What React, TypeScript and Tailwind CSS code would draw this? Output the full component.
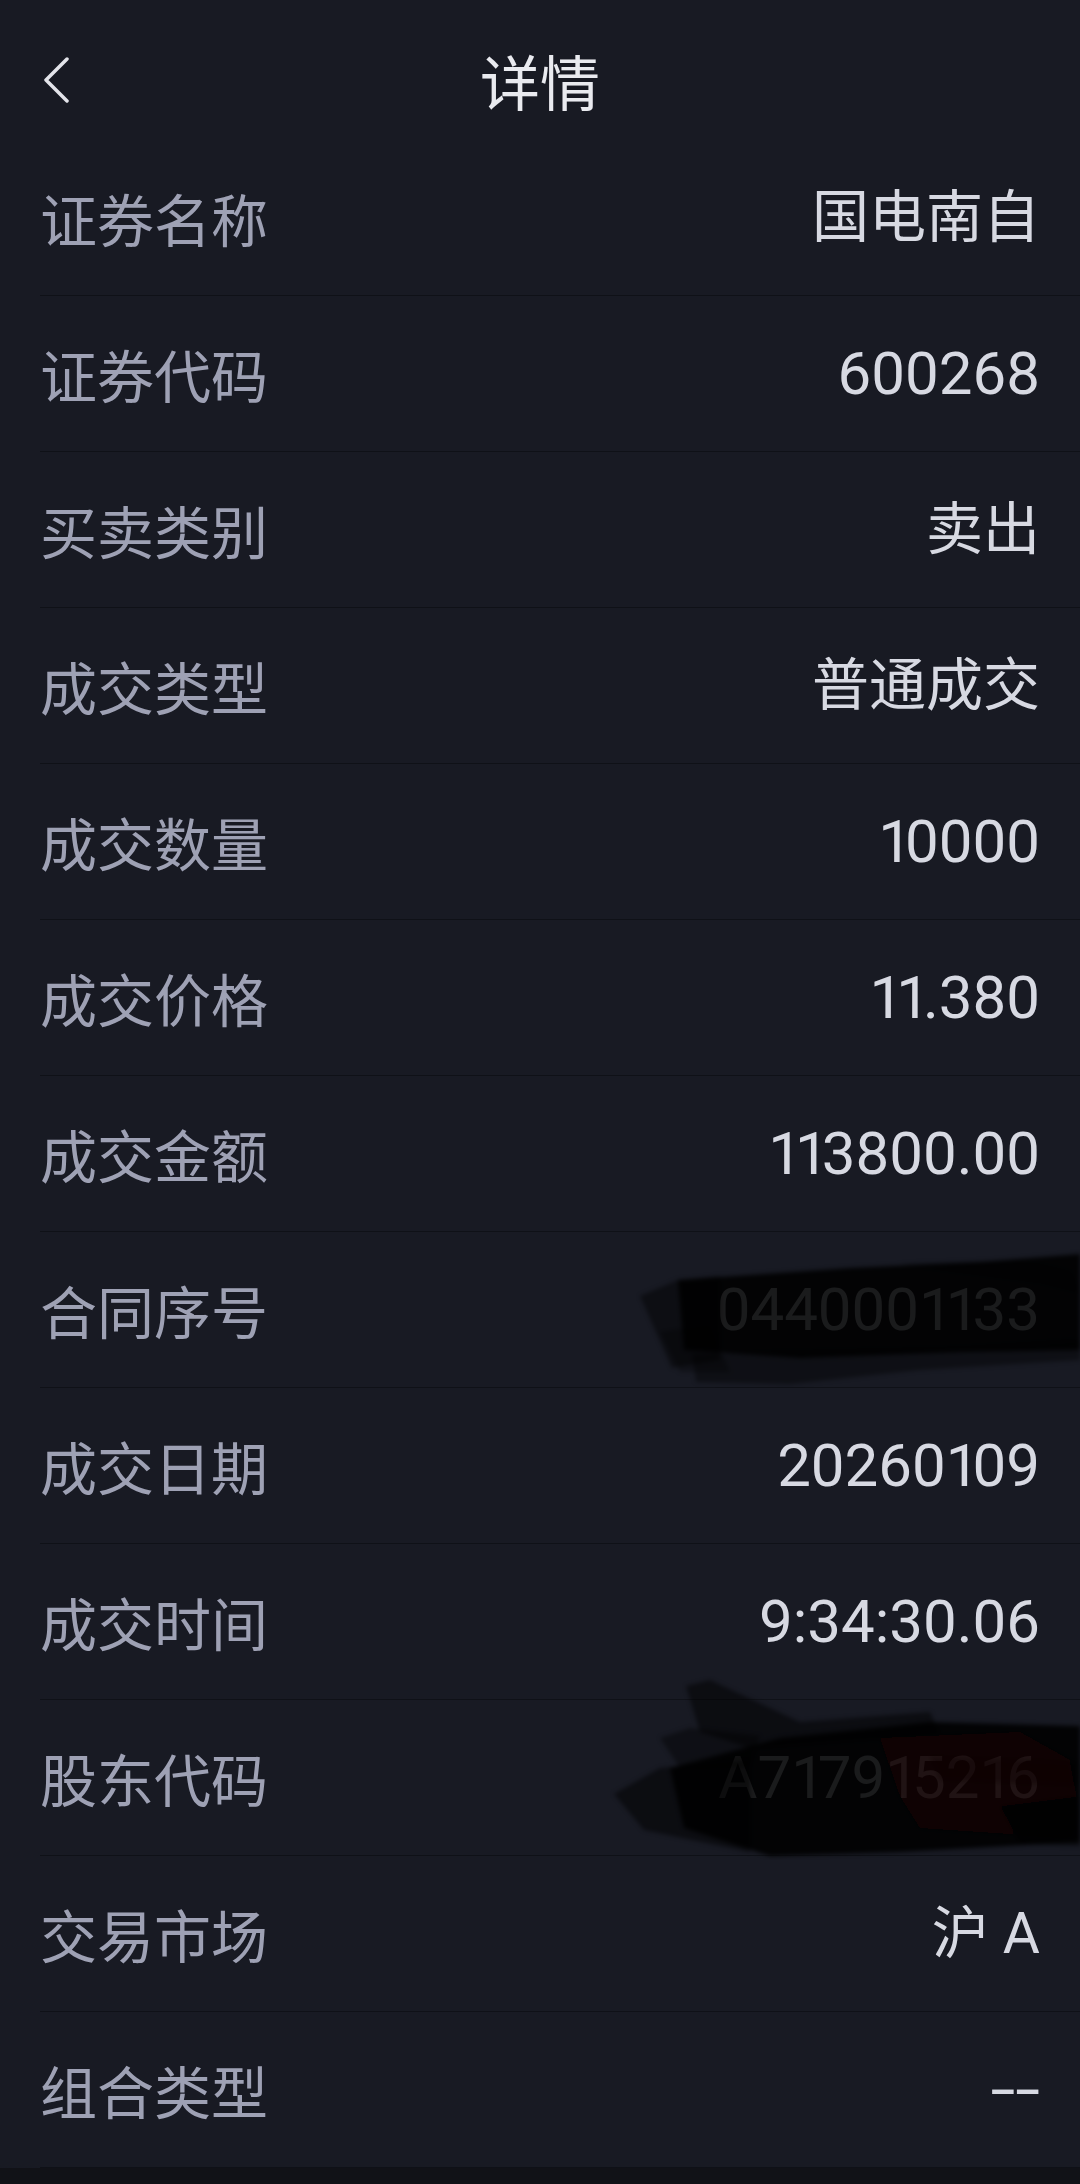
import React from "react";

type Row = { label: string; value: string; cjk?: boolean; redact?: 1 | 2; dash?: boolean };

const rows: Row[] = [
  { label: "证券名称", value: "国电南自", cjk: true },
  { label: "证券代码", value: "600268" },
  { label: "买卖类别", value: "卖出", cjk: true },
  { label: "成交类型", value: "普通成交", cjk: true },
  { label: "成交数量", value: "10000" },
  { label: "成交价格", value: "11.380" },
  { label: "成交金额", value: "113800.00" },
  { label: "合同序号", value: "0440001133", redact: 1 },
  { label: "成交日期", value: "20260109" },
  { label: "成交时间", value: "9:34:30.06" },
  { label: "股东代码", value: "A717915216", redact: 2 },
  { label: "交易市场", value: "沪 A", cjk: true },
  { label: "组合类型", value: "--", dash: true },
];

function Redact1() {
  return (
    <svg
      className="absolute right-0 top-0 h-[156px] w-[480px] pointer-events-none"
      viewBox="0 0 480 156"
    >
      <defs>
        <filter id="b1" x="-10%" y="-10%" width="120%" height="120%">
          <feGaussianBlur stdDeviation="2" />
        </filter>
      </defs>
      <g filter="url(#b1)">
        <polygon points="40,64 78,48 120,44 120,128 72,136" fill="#000" opacity="0.45" />
        <polygon points="60,100 110,92 130,140 80,140" fill="#000" opacity="0.3" />
        <polygon points="92,122 360,116 480,108 480,128 320,138 190,152 96,150" fill="#000" opacity="0.4" />
        <polygon points="78,48 250,36 380,30 480,22 480,118 360,120 200,126 84,118" fill="#000" opacity="0.88" />
        <polygon points="300,32 420,28 470,40 480,60 440,50" fill="#000" opacity="0.3" />
      </g>
    </svg>
  );
}

function Redact2() {
  return (
    <svg
      className="absolute right-0 top-[-24px] h-[184px] w-[480px] pointer-events-none"
      viewBox="0 0 480 184"
    >
      <defs>
        <filter id="b2" x="-10%" y="-10%" width="120%" height="120%">
          <feGaussianBlur stdDeviation="2" />
        </filter>
      </defs>
      <g filter="url(#b2)">
        <polygon points="14,118 60,92 150,84 150,176 44,154" fill="#000" opacity="0.5" />
        <polygon points="86,10 110,4 200,46 330,36 340,58 150,72 100,56" fill="#000" opacity="0.5" />
        <polygon points="60,62 90,52 160,60 150,90 80,92" fill="#000" opacity="0.4" />
        <polygon points="70,92 180,62 330,46 480,50 480,166 300,176 170,180 84,152" fill="#000" opacity="0.88" />
        <polygon points="280,62 420,56 470,84 480,140 470,162 320,152 300,120" fill="#2a0006" opacity="0.3" />
        <polygon points="330,80 480,86 480,110 340,104" fill="#000" opacity="0.4" />
        <polygon points="400,130 480,120 480,170 420,168" fill="#000" opacity="0.5" />
      </g>
    </svg>
  );
}

function Value({ text }: { text: string }) {
  return (
    <>
      {text.split("").map((c, i) =>
        c === "1" ? (
          <span key={i} className="tracking-[-7px]">
            1
          </span>
        ) : (
          <span key={i}>{c}</span>
        )
      )}
    </>
  );
}

export default function App() {
  return (
    <div className="flex h-[2184px] w-full flex-col bg-[#111217]">
      <div className="flex flex-col bg-[#181a23]">
        <div className="grid h-[140px] grid-cols-[1fr_auto_1fr] items-center pt-[20px]">
          <div className="flex items-center pl-[43px]">
            <svg width="28" height="46" viewBox="0 0 28 46">
              <polyline
                points="24,2 3,23 24,44"
                fill="none"
                stroke="#e3e4ea"
                strokeWidth="3.5"
                strokeLinecap="round"
                strokeLinejoin="round"
              />
            </svg>
          </div>
          <div
            className="text-[60px] leading-none text-[#e9eaef]"
            style={{ fontFamily: '"Noto Sans CJK SC", sans-serif' }}
          >
            详情
          </div>
          <div />
        </div>
        {rows.map((r) => (
          <div
            key={r.label}
            className="relative ml-[40px] flex h-[156px] items-center justify-between border-b border-[#0f1117] pr-[40px]"
          >
            <span
              className="text-[57px] leading-none text-[#9ea1b4]"
              style={{ fontFamily: '"Noto Sans CJK SC", sans-serif' }}
            >
              {r.label}
            </span>
            <span
              className={
                r.cjk
                  ? "text-[57px] leading-none text-[#d7d9e2]"
                  : r.dash
                  ? "inline-block origin-right scale-x-150 text-[60px] leading-none text-[#d7d9e2]"
                  : "text-[60px] leading-none text-[#d7d9e2]"
              }
              style={{ fontFamily: 'Roboto, "Noto Sans CJK SC", sans-serif' }}
            >
              {r.cjk || r.dash ? r.value : <Value text={r.value} />}
            </span>
            {r.redact === 1 && <Redact1 />}
            {r.redact === 2 && <Redact2 />}
          </div>
        ))}
      </div>
    </div>
  );
}
